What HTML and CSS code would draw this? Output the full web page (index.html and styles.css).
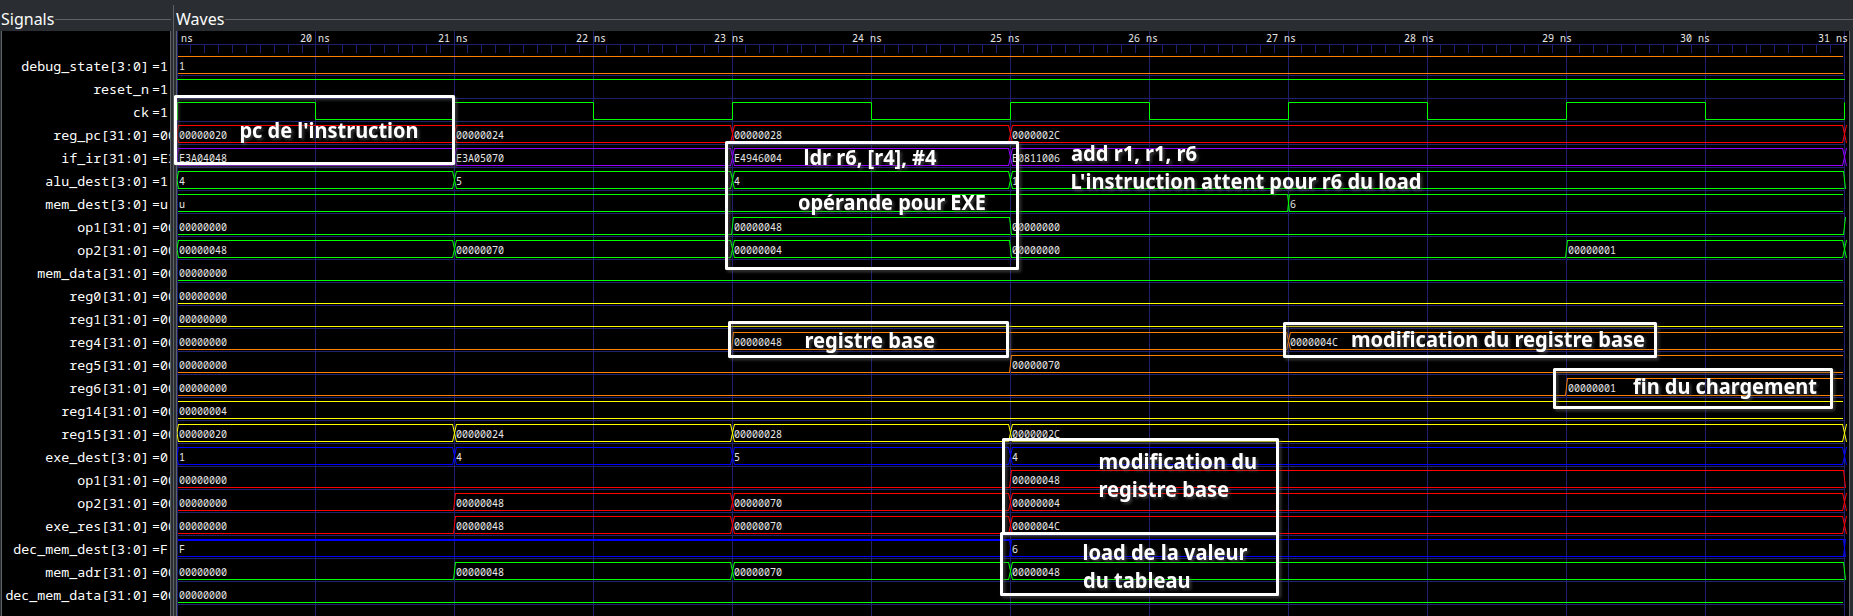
FILE: index.html
```html
<!DOCTYPE html>
<html lang="fr">
<head>
<meta charset="utf-8">
<title>Waves</title>
<link rel="stylesheet" href="styles.css">
</head>
<body>
<main class="viewer">
  <section class="signals">
    <h2 class="legend">Signals</h2>
    <ul class="names">
      <li><span>debug_state[3:0]</span><b>=1</b></li>
      <li><span>reset_n</span><b>=1</b></li>
      <li><span>ck</span><b>=1</b></li>
      <li><span>reg_pc[31:0]</span><b>=00</b></li>
      <li><span>if_ir[31:0]</span><b>=E3</b></li>
      <li><span>alu_dest[3:0]</span><b>=1</b></li>
      <li><span>mem_dest[3:0]</span><b>=u</b></li>
      <li><span>op1[31:0]</span><b>=00</b></li>
      <li><span>op2[31:0]</span><b>=00</b></li>
      <li><span>mem_data[31:0]</span><b>=00</b></li>
      <li><span>reg0[31:0]</span><b>=00</b></li>
      <li><span>reg1[31:0]</span><b>=00</b></li>
      <li><span>reg4[31:0]</span><b>=00</b></li>
      <li><span>reg5[31:0]</span><b>=00</b></li>
      <li><span>reg6[31:0]</span><b>=00</b></li>
      <li><span>reg14[31:0]</span><b>=00</b></li>
      <li><span>reg15[31:0]</span><b>=00</b></li>
      <li><span>exe_dest[3:0]</span><b>=0</b></li>
      <li><span>op1[31:0]</span><b>=00</b></li>
      <li><span>op2[31:0]</span><b>=00</b></li>
      <li><span>exe_res[31:0]</span><b>=00</b></li>
      <li><span>dec_mem_dest[3:0]</span><b>=F</b></li>
      <li><span>mem_adr[31:0]</span><b>=00</b></li>
      <li><span>dec_mem_data[31:0]</span><b>=00</b></li>
    </ul>
  </section>
  <div class="divider"></div>
  <section class="waves">
    <h2 class="legend">Waves</h2>
    <div class="canvas">
      <svg class="grid" id="grid" viewBox="177 31 1672 585" width="1672" height="585"></svg>
      <div class="rows" id="rows"></div>
    </div>
  </section>
  <svg class="notes" viewBox="0 0 1853 616" width="1853" height="616">
    <g class="boxes">
      <rect x="175.5" y="96.5" width="278" height="67"/>
      <rect x="726.5" y="142.5" width="291" height="126"/>
      <rect x="729.5" y="322.5" width="278" height="34"/>
      <rect x="1284.5" y="323.5" width="371" height="33"/>
      <rect x="1554.5" y="369.5" width="277" height="38"/>
      <rect x="1003.5" y="439.5" width="274" height="94"/>
      <rect x="1001.5" y="533.5" width="276" height="61"/>
    </g>
    <g class="captions">
      <text x="239.5" y="138" textLength="179" lengthAdjust="spacingAndGlyphs">pc de l'instruction</text>
      <text x="803.5" y="165" textLength="133" lengthAdjust="spacingAndGlyphs">ldr r6, [r4], #4</text>
      <text x="798" y="210" textLength="188" lengthAdjust="spacingAndGlyphs">opérande pour EXE</text>
      <text x="1071" y="161" textLength="126" lengthAdjust="spacingAndGlyphs">add r1, r1, r6</text>
      <text x="1070.5" y="189" textLength="351" lengthAdjust="spacingAndGlyphs">L'instruction attent pour r6 du load</text>
      <text x="804.5" y="348" textLength="130.5" lengthAdjust="spacingAndGlyphs">registre base</text>
      <text x="1351" y="347" textLength="294" lengthAdjust="spacingAndGlyphs">modification du registre base</text>
      <text x="1633" y="394" textLength="184" lengthAdjust="spacingAndGlyphs">fin du chargement</text>
      <text x="1098.5" y="469" textLength="158.5" lengthAdjust="spacingAndGlyphs">modification du</text>
      <text x="1098.5" y="497" textLength="130.5" lengthAdjust="spacingAndGlyphs">registre base</text>
      <text x="1082.5" y="560" textLength="165" lengthAdjust="spacingAndGlyphs">load de la valeur</text>
      <text x="1083" y="588" textLength="107.5" lengthAdjust="spacingAndGlyphs">du tableau</text>
    </g>
  </svg>
</main>
<script src="waves.js"></script>
</body>
</html>
```
FILE: styles.css
```css
* { box-sizing: border-box; }

body {
  margin: 0;
  background: #2a2e32;
  overflow: hidden;
}

.viewer {
  position: relative;
  display: flex;
  width: 1853px;
  height: 616px;
}

.legend {
  display: flex;
  align-items: center;
  gap: 1px;
  height: 31px;
  margin: 0;
  padding-top: 8px;
  color: #fcfcfc;
  font: 400 16px/23px "Noto Sans", sans-serif;
}

.legend::after {
  content: "";
  flex: 1;
  height: 1px;
  background: #5e6265;
}

.signals {
  display: flex;
  flex-direction: column;
  width: 171px;
  padding-left: 1px;
}

.names {
  flex: 1;
  margin: 0;
  padding: 22px 0 0;
  border: solid #5e6265;
  border-width: 0 1px;
  background: #000;
  color: #fff;
  font: 13.3px/23px "Noto Sans Mono", "DejaVu Sans Mono", monospace;
  list-style: none;
  overflow: hidden;
}

.names li {
  display: flex;
  height: 23px;
  padding-top: 2px;
  white-space: nowrap;
}

.names span {
  flex: none;
  width: 147px;
  text-align: right;
}

.names b {
  margin-left: 3px;
  font-weight: 400;
}

.divider {
  width: 3px;
  margin-top: 5px;
  margin-left: 2px;
  border-left: 1px solid #5e6265;
}

.waves {
  display: flex;
  flex: 1;
  flex-direction: column;
}

.canvas {
  position: relative;
  flex: 1;
  width: 1674px;
  border: solid #5e6265;
  border-width: 0 1px;
  background: #000;
}

.grid {
  position: absolute;
  top: 0;
  left: 0;
}

.rows {
  position: relative;
  display: flex;
  flex-direction: column;
  padding-top: 22px;
}

.row { display: block; }

.gridline { fill: none; stroke: #202070; }

.scale, .value {
  fill: #e6e6e6;
  font: 10px "Noto Sans Mono", "DejaVu Sans Mono", monospace;
  white-space: pre;
}

.trace { fill: none; stroke-width: 1; }
.slope { fill: none; stroke-width: 1; }
.green { stroke: #00ff00; }
.red { stroke: #ff0000; }
.orange { stroke: #ff8000; }
.yellow { stroke: #ffff00; }
.violet { stroke: #9600ff; }
.blue { stroke: #0000ff; }

.notes {
  position: absolute;
  top: 0;
  left: 0;
  filter: drop-shadow(2px 2px 1.5px rgba(90, 90, 90, .65));
}

.boxes {
  fill: none;
  stroke: #fff;
  stroke-width: 3;
  stroke-linejoin: round;
}

.captions {
  fill: #fff;
  font: 700 20.5px "Noto Sans", "Open Sans", sans-serif;
}
```
FILE: waves.js
```js
const LEFT = 177, RIGHT = 1844, TOP = 3.5, LOW = 20.5;
const at = ns => ns === 19 ? LEFT : 315 + (ns - 20) * 139;

// Each bus is [colour, [start ns, value], ...]; the value at 31 ns closes the trace.
const signals = [
  ['orange', [19, '1']],
  ['green', 'high'],
  ['green', 'clock'],
  ['red', [19, '00000020'], [21, '00000024'], [23, '00000028'], [25, '0000002C'], [31, 'x']],
  ['violet', [19, 'E3A04048'], [21, 'E3A05070'], [23, 'E4946004'], [25, 'E0811006'], [31, 'x']],
  ['green', [19, '4'], [21, '5'], [23, '4'], [25, '1'], [31, '0']],
  ['green', [19, 'u'], [27, '6']],
  ['green', [19, '00000000'], [23, '00000048'], [25, '00000000'], [31, 'x']],
  ['green', [19, '00000048'], [21, '00000070'], [23, '00000004'], [25, '00000000'], [29, '00000001'], [31, 'x']],
  ['green', [19, '00000000']],
  ['yellow', [19, '00000000']],
  ['yellow', [19, '00000000']],
  ['orange', [19, '00000000'], [23, '00000048'], [27, '0000004C']],
  ['orange', [19, '00000000'], [25, '00000070']],
  ['orange', [19, '00000000'], [29, '00000001']],
  ['yellow', [19, '00000004']],
  ['yellow', [19, '00000020'], [21, '00000024'], [23, '00000028'], [25, '0000002C'], [31, 'x']],
  ['blue', [19, '1'], [21, '4'], [23, '5'], [25, '4'], [31, 'x']],
  ['red', [19, '00000000'], [25, '00000048'], [31, '0']],
  ['red', [19, '00000000'], [21, '00000048'], [23, '00000070'], [25, '00000004'], [31, 'x']],
  ['red', [19, '00000000'], [21, '00000048'], [23, '00000070'], [25, '0000004C'], [31, 'x']],
  ['blue', [19, 'F'], [25, '6'], [31, 'F']],
  ['green', [19, '00000000'], [21, '00000048'], [23, '00000070'], [25, '00000048'], [31, '0']],
  ['green', [19, '00000000']]
];

const isZero = v => /^0+$/.test(v);
const label = (x, v) =>
  `<text class="value" x="${x + 2}" y="17" textLength="${v.length * 6}" lengthAdjust="spacingAndGlyphs">${v}</text>`;

function slope(x, before, after) {
  if (isZero(before)) return `M${x - .5} 21L${x + 1.5} 3`;
  if (isZero(after)) return `M${x - .5} 3L${x + 1.5} 21`;
  if (before === 'u' || before === 'F' || after === 'F') return `M${x - .5} 3L${x + 1.5} 21M${x - .5} 21L${x + 1.5} 3`;
  return `M${x - 1.5} 3L${x + 2.5} 21M${x - 1.5} 21L${x + 2.5} 3`;
}

function bus(colour, changes) {
  const open = changes[changes.length - 1][0] !== 31;
  const pts = open ? [...changes, [31, null]] : changes;
  const leads = changes.length > 2 && !isZero(changes[0][1]) && changes[0][1] !== 'F';
  let lines = '', slopes = '', texts = '';
  for (let i = 0; i < pts.length - 1; i++) {
    const [ns, v] = pts[i], next = pts[i + 1][1];
    const x0 = at(ns), x1 = at(pts[i + 1][0]);
    const prev = i ? pts[i - 1][1] : null;
    const a = x0 + (i ? (isZero(prev) || isZero(v) ? 1 : 2) : 1);
    const b = x1 - (next !== null && (isZero(next) || isZero(v)) ? 0 : 1);
    if (!isZero(v)) lines += `M${a} ${TOP}H${b}`;
    if (v === 'F') lines += `M${a} ${TOP + 1}H${b}`;
    lines += `M${a} ${LOW}H${b}`;
    if (i) slopes += slope(x0, prev, v);
    texts += label(x0, v);
  }
  if (leads) slopes += `M${LEFT} 12L${LEFT + 1.5} 3M${LEFT} 12L${LEFT + 1.5} 21`;
  if (!open) slopes += slope(RIGHT, pts[pts.length - 2][1], pts[pts.length - 1][1]);
  return `<path class="trace ${colour}" d="${lines}"/><path class="slope ${colour}" d="${slopes}"/>${texts}`;
}

function clock(colour) {
  let d = `M${LEFT + .5} 21V${TOP}`;
  for (let ns = 20; ns <= 31; ns++) {
    d += `H${at(ns) + .5}V${ns % 2 ? TOP : LOW}`;
  }
  return `<path class="trace ${colour}" d="${d}"/>`;
}

document.getElementById('rows').innerHTML = signals.map(([colour, ...c]) => {
  const body = c[0] === 'high' ? `<path class="trace ${colour}" d="M${LEFT} ${TOP}H${RIGHT + 1}"/>`
    : c[0] === 'clock' ? clock(colour) : bus(colour, c);
  return `<svg class="row" viewBox="177 0 1672 23" width="1672" height="23">${body}</svg>`;
}).join('');

let lines = `M${LEFT} 44.5H${RIGHT}`, scale = `<text class="scale" x="181" y="42">ns</text>`;
for (let ns = 19; ns <= 31; ns++) {
  const x = at(ns);
  lines += `M${x + .5} 31V616`;
  if (ns < 31) for (let k = 0; k < 9; k++) lines += `M${x + 13.5 + k * 14} 45V53`;
  if (ns > 19) scale += `<text class="scale" x="${300 + (ns - 20) * 138}" y="42">${ns} ns</text>`;
}
for (let i = 0; i < signals.length; i++) lines += `M${LEFT} ${75.5 + i * 23}H${RIGHT}`;
document.getElementById('grid').innerHTML = `<path class="gridline" d="${lines}"/>${scale}`;
```
